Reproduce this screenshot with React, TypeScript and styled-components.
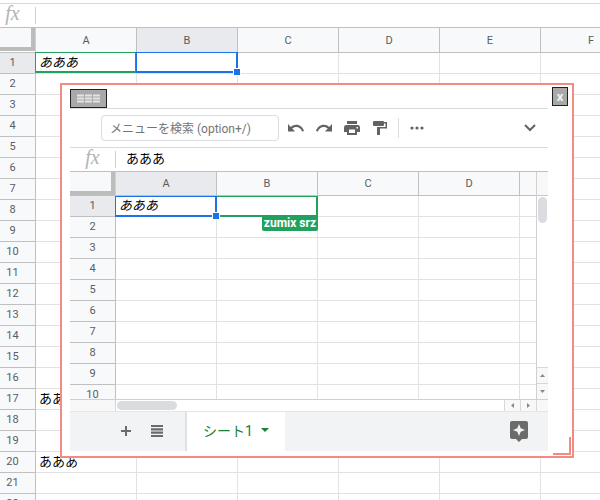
import React from "react";
import styled, { createGlobalStyle, css } from "styled-components";

const GlobalStyle = createGlobalStyle`
  *, *::before, *::after { box-sizing: border-box; }
  body {
    margin: 0;
    background: #fff;
    font-family: Roboto, "Noto Sans CJK JP", sans-serif;
    color: #000;
  }
  button, input { font: inherit; margin: 0; padding: 0; }
`;

const GREEN = "#21a15e";
const BLUE = "#1a73e8";

const Page = styled.main`
  position: relative;
  height: 100vh;
  overflow: hidden;
`;

const Backdrop = styled.div`
  margin: 3px 0 0 -10px;
  border-top: 1px solid #dadada;
`;

const FormulaRow = styled.div`
  display: flex;
  align-items: center;
  height: 24px;
  border-bottom: 1px solid #c0c0c0;
  flex: none;
`;

const FxLabel = styled.label`
  flex: none;
  width: 46px;
  height: 17px;
  border-right: 1px solid #d0d0d0;
  font: italic 20px/12px "Liberation Serif", serif;
  color: #b4b4b4;
  text-align: center;
`;

const FormulaInput = styled.input`
  flex: 1;
  min-width: 0;
  height: 20px;
  padding: 0 0 4px 10px;
  border: 0;
  outline: 0;
  background: transparent;
  font-size: 13px;
  color: #000;
`;

const SheetTable = styled.table<{ $columns: number }>`
  width: ${(p) => 46 + p.$columns * 101}px;
  table-layout: fixed;
  border-collapse: separate;
  border-spacing: 0;
`;

const headerLook = css<{ $active?: boolean }>`
  padding: 0;
  background: ${(p) => (p.$active ? "#e8eaed" : "#f8f9fb")};
  border-right: 1px solid #c0c0c0;
  border-bottom: 1px solid #c0c0c0;
  font-size: 11px;
  font-weight: 400;
  line-height: 14px;
  color: #5a5d61;
  text-align: center;
`;

const ColumnHead = styled.th<{ $active?: boolean; $height: number }>`
  ${headerLook}
  width: 101px;
  height: ${(p) => p.$height}px;
  padding-top: ${(p) => (p.$height - 24) * 2}px;
`;

const RowHead = styled.th<{ $active?: boolean }>`
  ${headerLook}
  height: 21px;
`;

const CornerCell = styled.td`
  width: 46px;
  padding: 0;
  vertical-align: top;
  border-right: 1px solid #d0d0d0;
  border-bottom: 1px solid #c0c0c0;
`;

const Corner = styled.div`
  height: 23px;
  background: #f8f9fb;
  border: solid #bcbcbc;
  border-width: 0 4px 4px 0;
`;

const Cell = styled.td<{ $italic?: boolean }>`
  position: relative;
  height: 21px;
  padding: 0 0 0 3px;
  border-right: 1px solid #e2e2e2;
  border-bottom: 1px solid #e2e2e2;
  font-size: 13px;
  line-height: 18px;
  font-style: ${(p) => (p.$italic ? "italic" : "normal")};
  white-space: nowrap;
`;

const Selection = styled.span<{ $own: boolean; $below: boolean }>`
  position: absolute;
  z-index: ${(p) => (p.$own ? 2 : 1)};
  inset: ${(p) => (p.$below ? "0 -1px -1px" : "-1px -1px 0")};
  border: 2px solid ${(p) => (p.$own ? BLUE : GREEN)};
  border-top-width: 1px;
  border-left-width: 1px;
`;

const FillHandle = styled.span`
  position: absolute;
  right: -5px;
  bottom: -5px;
  width: 8px;
  height: 8px;
  border: 1px solid #fff;
  background: ${BLUE};
`;

const UserTag = styled.span`
  position: absolute;
  right: -2px;
  top: 19px;
  height: 15px;
  padding: 0 2px;
  background: ${GREEN};
  color: #fff;
  font-size: 12px;
  font-weight: 700;
  font-style: normal;
  line-height: 15px;
  border-radius: 0 0 2px 2px;
`;

const Floating = styled.section`
  position: absolute;
  z-index: 5;
  inset: 83px 26px 42px 60px;
  display: flex;
  flex-direction: column;
  border: 2px solid #f28b82;
  background: #fff;
`;

const TitleBar = styled.header`
  display: flex;
  justify-content: space-between;
  flex: none;
  height: 23px;
  padding: 2px 4px 0 8px;
`;

const ChromeButton = styled.button<{ $wide?: boolean }>`
  display: flex;
  align-items: center;
  justify-content: center;
  align-self: ${(p) => (p.$wide ? "flex-end" : "flex-start")};
  width: ${(p) => (p.$wide ? 37 : 16)}px;
  height: 19px;
  border: 1px solid #222;
  background: #a9a9a9;
  color: #f2f2f2;
  font-size: 13px;
  font-weight: 700;
  line-height: 16px;
`;

const Content = styled.div`
  flex: 1;
  min-height: 0;
  display: flex;
  flex-direction: column;
  margin: 0 24px 5px 8px;
  border-top: 1px solid #dadada;
`;

const Toolbar = styled.div`
  display: flex;
  align-items: center;
  flex: none;
  height: 39px;
  padding: 0 4px 0 31px;
  border-bottom: 1px solid #dadada;
`;

const Search = styled.input`
  width: 178px;
  height: 26px;
  margin-right: 3px;
  padding: 1px 8px 0;
  border: 1px solid #dadce0;
  border-radius: 4px;
  outline: 0;
  font-size: 12px;
  color: #3c4043;
  &::placeholder { color: #757575; opacity: 1; }
`;

const IconButton = styled.button<{ $push?: boolean }>`
  display: flex;
  align-items: center;
  justify-content: center;
  flex: none;
  width: 28px;
  height: 28px;
  margin-left: ${(p) => (p.$push ? "auto" : 0)};
  border: 0;
  background: transparent;
  color: #5f6368;
`;

const Separator = styled.span`
  width: 1px;
  height: 20px;
  margin: 0 4px;
  background: #dadce0;
`;

const SheetArea = styled.div`
  flex: 1;
  min-height: 0;
  display: grid;
  grid-template-columns: minmax(0, 1fr) 11px;
  grid-template-rows: minmax(0, 1fr) 11px;
`;

const Viewport = styled.div`
  overflow: hidden;
  border-right: 1px solid #d0d0d0;
  border-bottom: 1px solid #d0d0d0;
`;

const VerticalBar = styled.div`
  display: flex;
  flex-direction: column;
  border-bottom: 1px solid #d0d0d0;
`;

const BarCap = styled.div`
  height: 24px;
  background: #f8f8f8;
  border-bottom: 1px solid #c8c8c8;
`;

const Track = styled.div`
  flex: 1;
  padding: 1px;
`;

const Thumb = styled.div<{ $w: number; $h: number }>`
  width: ${(p) => p.$w}px;
  height: ${(p) => p.$h}px;
  border-radius: 5px;
  background: #dadce0;
`;

const Arrow = styled.button<{ $side: "top" | "left" }>`
  display: flex;
  align-items: center;
  justify-content: center;
  width: ${(p) => (p.$side === "top" ? 11 : 16)}px;
  height: ${(p) => (p.$side === "top" ? 16 : 11)}px;
  border: solid #d8d8d8;
  border-width: ${(p) => (p.$side === "top" ? "1px 0 0 0" : "0 0 0 1px")};
  background: #f8f8f8;
  color: #888;
`;

const HorizontalBar = styled.div`
  display: flex;
  border-right: 1px solid #d8d8d8;
`;

const BarStart = styled.div`
  width: 46px;
  background: #f8f8f8;
  border-right: 1px solid #d8d8d8;
`;

const BarCorner = styled.div`
  background: #f8f8f8;
`;

const BottomBar = styled.footer`
  display: flex;
  align-items: stretch;
  flex: none;
  gap: 1px;
  height: 40px;
  padding: 0 20px 0 41px;
  border-top: 1px solid #e6e6e8;
  background: #f1f3f4;
`;

const BarButton = styled(IconButton)`
  width: 30px;
  height: 38px;
  color: #6b6b6b;
`;

const Tab = styled.button`
  display: flex;
  align-items: center;
  gap: 8px;
  margin-left: 12px;
  padding: 0 16px 3px;
  border: 0;
  border-left: 2px solid #dfe1e3;
  background: #fff;
  color: #188038;
  font-size: 14px;
  font-weight: 400;
  white-space: nowrap;
`;

const Explore = styled.button`
  display: flex;
  align-items: center;
  margin-left: auto;
  border: 0;
  background: transparent;
  color: #6b6b6b;
`;

const ResizeGrip = styled.span`
  position: absolute;
  right: 1px;
  bottom: 1px;
  width: 18px;
  height: 18px;
  border: solid #f28b82;
  border-width: 0 2px 2px 0;
`;

type GridProps = {
  columns: string[];
  rows: number;
  headHeight: number;
  values: Record<string, string>;
  own: string;
  other: string;
  tag?: string;
};

function SheetGrid({ columns, rows, headHeight, values, own, other, tag }: GridProps) {
  const below = headHeight === 24;
  return (
    <SheetTable $columns={columns.length}>
      <thead>
        <tr>
          <CornerCell>
            <Corner />
          </CornerCell>
          {columns.map((c, i) => (
            <ColumnHead key={i} scope="col" $height={headHeight} $active={own[0] === c}>
              {c}
            </ColumnHead>
          ))}
        </tr>
      </thead>
      <tbody>
        {Array.from({ length: rows }, (_, i) => i + 1).map((r) => (
          <tr key={r}>
            <RowHead scope="row" $active={own.slice(1) === String(r)}>
              {r}
            </RowHead>
            {columns.map((c, i) => {
              const id = c + r;
              return (
                <Cell key={i} $italic={r === 1}>
                  {values[id]}
                  {id === own && (
                    <Selection $own $below={below}>
                      <FillHandle />
                    </Selection>
                  )}
                  {id === other && (
                    <Selection $own={false} $below={below}>
                      {tag && <UserTag>{tag}</UserTag>}
                    </Selection>
                  )}
                </Cell>
              );
            })}
          </tr>
        ))}
      </tbody>
    </SheetTable>
  );
}

function Triangle({ turn }: { turn: number }) {
  return (
    <svg width="7" height="7" viewBox="0 0 7 7" aria-hidden="true">
      <path d="M1 5L3.5 2L6 5z" fill="currentColor" transform={`rotate(${turn} 3.5 3.5)`} />
    </svg>
  );
}

function ToolbarIcons() {
  return (
    <>
      <IconButton aria-label="元に戻す">
        <svg width="16" height="8" viewBox="2 7 20.5 9.5" preserveAspectRatio="none">
          <path
            fill="currentColor"
            d="M12.5 8c-2.65 0-5.05.99-6.9 2.6L2 7v9h9l-3.62-3.62c1.39-1.16 3.16-1.88 5.12-1.88 3.54 0 6.55 2.31 7.6 5.5l2.37-.78C21.08 11.03 17.15 8 12.5 8z"
          />
        </svg>
      </IconButton>
      <IconButton aria-label="やり直し">
        <svg width="16" height="8" viewBox="1.5 7 20.5 9.5" preserveAspectRatio="none">
          <path
            fill="currentColor"
            d="M18.4 10.6C16.55 8.99 14.15 8 11.5 8c-4.65 0-8.58 3.03-9.96 7.22L3.9 16c1.05-3.19 4.05-5.5 7.6-5.5 1.95 0 3.73.72 5.12 1.88L13 16h9V7l-3.6 3.6z"
          />
        </svg>
      </IconButton>
      <IconButton aria-label="印刷">
        <svg width="16" height="14" viewBox="0 0 16 14">
          <path
            fill="currentColor"
            fillRule="evenodd"
            d="M3 0h10v3H3zM2.4 4h11.2A2.4 2.4 0 0 1 16 6.400V11h-3v3H3v-3H0V6.400A2.400 2.400 0 0 1 2.400 4zM5 8.500V12h6V8.500zM12.500 6v1.500H14V6z"
          />
        </svg>
      </IconButton>
      <IconButton aria-label="書式を貼り付け">
        <svg width="14" height="14" viewBox="0 0 14 14">
          <path
            fill="currentColor"
            d="M1 0h9q1 0 1 1h3v6.500H7V14H4V6h8.500V2.500H11V4q0 1-1 1H1Q0 5 0 4V1Q0 0 1 0z"
          />
        </svg>
      </IconButton>
      <Separator />
      <IconButton aria-label="その他">
        <svg width="14" height="4" viewBox="0 0 14 4" fill="currentColor">
          <circle cx="2" cy="2" r="1.600" />
          <circle cx="7" cy="2" r="1.600" />
          <circle cx="12" cy="2" r="1.600" />
        </svg>
      </IconButton>
      <IconButton $push aria-label="メニューを表示">
        <svg width="12" height="8" viewBox="0 0 12 8">
          <path d="M1 1l5 5 5-5" fill="none" stroke="currentColor" strokeWidth="2" />
        </svg>
      </IconButton>
    </>
  );
}

export default function App() {
  return (
    <Page>
      <GlobalStyle />
      <Backdrop>
        <FormulaRow>
          <FxLabel htmlFor="formula-main">fx</FxLabel>
          <FormulaInput id="formula-main" />
        </FormulaRow>
        <SheetGrid
          columns={["A", "B", "C", "D", "E", "F"]}
          rows={22}
          headHeight={25}
          values={{ A1: "あああ", A17: "あああ", A20: "あああ" }}
          own="B1"
          other="A1"
        />
      </Backdrop>

      <Floating>
        <TitleBar>
          <ChromeButton $wide aria-label="移動">
            <svg width="23" height="9" viewBox="0 0 23 9" fill="#e4e4e4" aria-hidden="true">
              {[0, 8, 16].map((x) =>
                [0, 3, 6].map((y) => <rect key={`${x}-${y}`} x={x} y={y + 0.5} width="7" height="2" />)
              )}
            </svg>
          </ChromeButton>
          <ChromeButton>x</ChromeButton>
        </TitleBar>
        <Content>
          <Toolbar>
            <Search aria-label="メニューを検索" placeholder="メニューを検索 (option+/)" />
            <ToolbarIcons />
          </Toolbar>
          <FormulaRow>
            <FxLabel htmlFor="formula-inner">fx</FxLabel>
            <FormulaInput id="formula-inner" defaultValue="あああ" />
          </FormulaRow>
          <SheetArea>
            <Viewport>
              <SheetGrid
                columns={["A", "B", "C", "D", ""]}
                rows={10}
                headHeight={24}
                values={{ A1: "あああ" }}
                own="A1"
                other="B1"
                tag="zumix srz"
              />
            </Viewport>
            <VerticalBar>
              <BarCap />
              <Track>
                <Thumb $w={9} $h={26} />
              </Track>
              <Arrow $side="top" aria-label="上へ">
                <Triangle turn={0} />
              </Arrow>
              <Arrow $side="top" aria-label="下へ">
                <Triangle turn={180} />
              </Arrow>
            </VerticalBar>
            <HorizontalBar>
              <BarStart />
              <Track>
                <Thumb $w={60} $h={9} />
              </Track>
              <Arrow $side="left" aria-label="左へ">
                <Triangle turn={-90} />
              </Arrow>
              <Arrow $side="left" aria-label="右へ">
                <Triangle turn={90} />
              </Arrow>
            </HorizontalBar>
            <BarCorner />
          </SheetArea>
          <BottomBar>
            <BarButton aria-label="シートを追加">
              <svg width="10" height="10" viewBox="0 0 10 10">
                <path d="M5 0v10M0 5h10" stroke="currentColor" strokeWidth="2" />
              </svg>
            </BarButton>
            <BarButton aria-label="すべてのシート">
              <svg width="12" height="12" viewBox="0 0 12 12">
                <path d="M0 1h12M0 4.300h12M0 7.600h12M0 11h12" stroke="currentColor" strokeWidth="2.200" />
              </svg>
            </BarButton>
            <Tab>
              シート1
              <svg width="8" height="4" viewBox="0 0 8 4" aria-hidden="true">
                <path d="M0 0h8L4 4z" fill="currentColor" />
              </svg>
            </Tab>
            <Explore aria-label="データ探索">
              <svg width="18" height="21" viewBox="0 0 18 21">
                <path
                  fill="currentColor"
                  fillRule="evenodd"
                  d="M2 0h14a2 2 0 0 1 2 2v14a2 2 0 0 1-2 2h-4l-3 3-3-3H2a2 2 0 0 1-2-2V2a2 2 0 0 1 2-2zM9 3L7.300 7.300L3 9l4.300 1.700L9 15l1.700-4.300L15 9l-4.300-1.700z"
                />
              </svg>
            </Explore>
          </BottomBar>
        </Content>
        <ResizeGrip />
      </Floating>
    </Page>
  );
}
